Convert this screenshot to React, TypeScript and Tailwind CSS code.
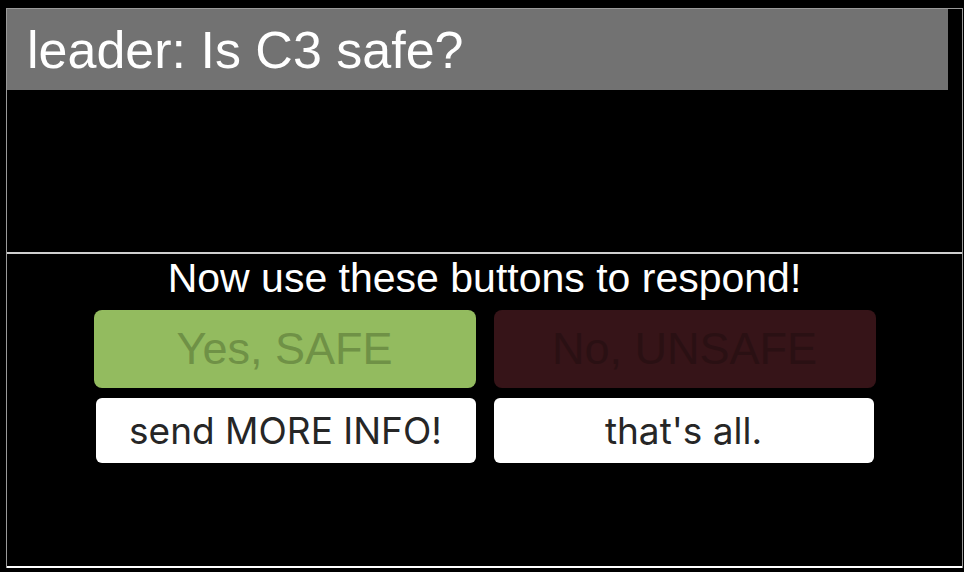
export default function App() {
  return (
    <div className="min-h-[572px] bg-black pt-2 pl-[6px] pr-[1px] font-['Liberation_Sans',Arial,sans-serif]">
      <div className="border-l border-r border-t border-[#9a9a9a]">
        <div className="mr-[14px] h-[81px] bg-[#727272] pl-[20px] pt-[11px] text-[52px] leading-[60px] text-white">
          leader: Is C3 safe?
        </div>
        <div className="h-[162px]" />
        <div className="border-t-2 border-[#cfcfcf]">
          <div className="pt-[3px] text-center text-[41px] leading-[42px] text-white">
            Now use these buttons to respond!
          </div>
          <div className="mt-[11px] flex justify-center">
            <div className="grid w-[782px] grid-cols-2 gap-x-[18px] gap-y-[10px]">
              <button className="flex h-[78px] items-center justify-center rounded-lg bg-[#93bb5f] text-[45px] text-[#6f9146]">
                Yes, SAFE
              </button>
              <button className="flex h-[78px] items-center justify-center rounded-lg bg-[#361418] text-[45px] text-[#2a1013]">
                No, UNSAFE
              </button>
              <button className="ml-[2px] flex h-[65px] w-[380px] items-center justify-center rounded-md bg-white font-['Inter',sans-serif] text-[37px] text-[#262626]">
                send MORE INFO!
              </button>
              <button className="flex h-[65px] w-[380px] items-center justify-center rounded-md bg-white font-['Inter',sans-serif] text-[37px] text-[#262626]">
                that's all.
              </button>
            </div>
          </div>
          <div className="mt-[103px] border-t-2 border-white" />
        </div>
      </div>
    </div>
  );
}
